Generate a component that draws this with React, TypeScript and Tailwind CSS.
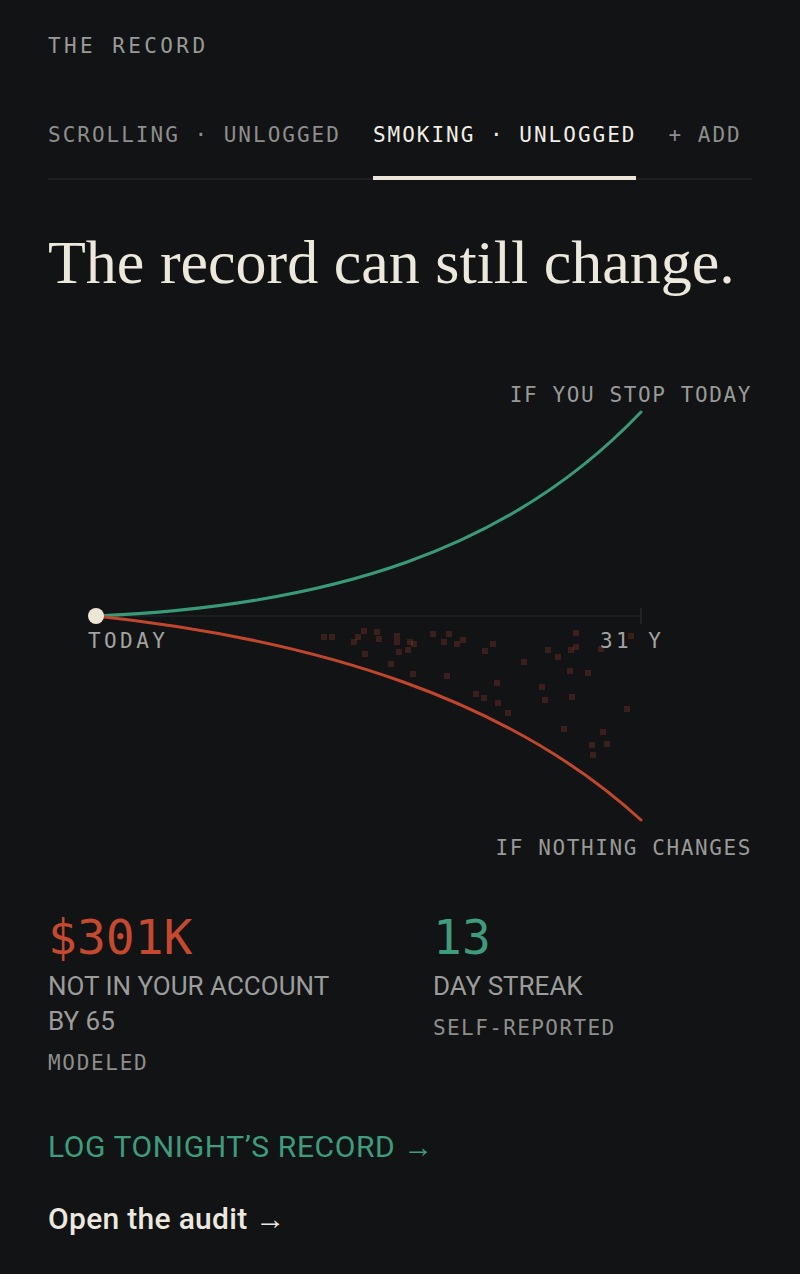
import React from 'react';

const mono = "font-['DejaVu_Sans_Mono','Liberation_Mono',monospace]";
const sans = "font-['Roboto','Liberation_Sans',sans-serif]";

// scatter of modeled outcomes under the red line (page coords, centers)
const dots: [number, number][] = [
  [324, 637], [332, 637], [354, 642], [358, 637], [364, 631], [377, 632], [379, 639],
  [397, 636], [397, 642], [410, 642], [414, 644], [399, 652], [408, 650], [365, 654],
  [391, 664], [433, 634], [449, 634], [444, 642], [457, 644], [463, 640], [413, 674],
  [447, 676], [476, 694], [493, 644], [485, 651], [576, 633], [631, 636], [548, 650],
  [558, 657], [571, 650], [576, 647], [601, 649], [524, 662], [570, 671], [588, 673],
  [497, 683], [542, 687], [484, 698], [545, 700], [572, 697], [498, 703], [508, 713],
  [627, 709], [564, 729], [603, 732], [592, 745], [607, 744], [593, 755],
];

const tabs = [
  { label: 'SCROLLING · UNLOGGED', active: false },
  { label: 'SMOKING · UNLOGGED', active: true },
  { label: '+ ADD', active: false },
];

const Chart: React.FC = () => {
  // svg origin sits at page (48, 409)
  const ox = 48;
  const oy = 409;
  return (
    <svg width="704" height="416" viewBox="0 0 704 416" className="block">
      <line x1="48" y1="207" x2="593" y2="207" stroke="#262a2c" strokeWidth="1" />
      <line x1="593" y1="199" x2="593" y2="215" stroke="#33373a" strokeWidth="1" />
      {dots.map(([x, y], i) => (
        <rect key={i} x={x - ox - 3} y={y - oy - 3} width="6" height="6" fill="#c4492f" opacity="0.24" />
      ))}
      <path d="M48,207 C282,197 462,141 593,3" fill="none" stroke="#3a9a78" strokeWidth="3" strokeLinecap="round" />
      <path d="M48,207 C272,231 462,291 593,411" fill="none" stroke="#c0462e" strokeWidth="3" strokeLinecap="round" />
      <circle cx="48" cy="207" r="8" fill="#ece6d6" />
      <text x="40" y="239" fill="#a3a3a0" fontSize="21" letterSpacing="3.4" fontFamily="DejaVu Sans Mono, monospace">TODAY</text>
      <text x="552" y="239" fill="#a3a3a0" fontSize="21" letterSpacing="3.4" fontFamily="DejaVu Sans Mono, monospace">31 Y</text>
    </svg>
  );
};

export default function App() {
  return (
    <div className="min-h-[1274px] w-full bg-[#111315] px-12 pt-[32px] pb-10">
      <div className={`${mono} text-[21px] leading-[28px] tracking-[3.4px] text-[#9a9a98]`}>THE RECORD</div>

      {/* Tabs */}
      <nav className="mt-[61px] flex gap-8 border-b-2 border-[#1e2123]">
        {tabs.map((t) => (
          <div
            key={t.label}
            className={`${mono} -mb-[2px] whitespace-nowrap border-b-4 pb-[27px] text-[21px] leading-[28px] tracking-[2px] ${
              t.active ? 'border-[#ece6d8] text-[#f1eee6]' : 'border-transparent text-[#8e8e8c]'
            }`}
          >
            {t.label}
          </div>
        ))}
      </nav>

      <h1 className="mt-[48px] font-['Liberation_Serif',serif] text-[62px] leading-[68px] text-[#ece8dc]">
        The record can still change.
      </h1>

      {/* Projection */}
      <div className="mt-[85px]">
        <div className={`${mono} text-right text-[21px] leading-[28px] tracking-[1.6px] text-[#9a9a98]`}>IF YOU STOP TODAY</div>
        <Chart />
        <div className={`${mono} mt-[9px] text-right text-[21px] leading-[28px] tracking-[1.6px] text-[#9a9a98]`}>IF NOTHING CHANGES</div>
      </div>

      {/* Stats */}
      <div className="mt-[47px] grid grid-cols-[385px_1fr]">
        <div>
          <div className={`${mono} text-[48px] leading-[56px] text-[#c4492f]`}>$301K</div>
          <div className={`${sans} mt-1 text-[26px] leading-[35px] text-[#9c9c9a]`}>
            NOT IN YOUR ACCOUNT
            <br />
            BY 65
          </div>
          <div className={`${mono} mt-[10px] text-[21px] leading-[28px] tracking-[1.7px] text-[#8e8e8c]`}>MODELED</div>
        </div>
        <div>
          <div className={`${mono} text-[48px] leading-[56px] text-[#3f9c7c]`}>13</div>
          <div className={`${sans} mt-1 text-[26px] leading-[35px] text-[#9c9c9a]`}>DAY STREAK</div>
          <div className={`${mono} mt-[10px] text-[21px] leading-[28px] tracking-[1.4px] text-[#8e8e8c]`}>SELF-REPORTED</div>
        </div>
      </div>

      {/* Actions */}
      <div className={`${sans} mt-[52px] text-[30px] leading-[36px] tracking-[0.6px] text-[#3f9c7c]`}>LOG TONIGHT’S RECORD →</div>
      <div className={`${sans} mt-9 text-[30px] leading-[36px] font-medium tracking-[0.3px] text-[#ece8df]`}>Open the audit →</div>
    </div>
  );
}
